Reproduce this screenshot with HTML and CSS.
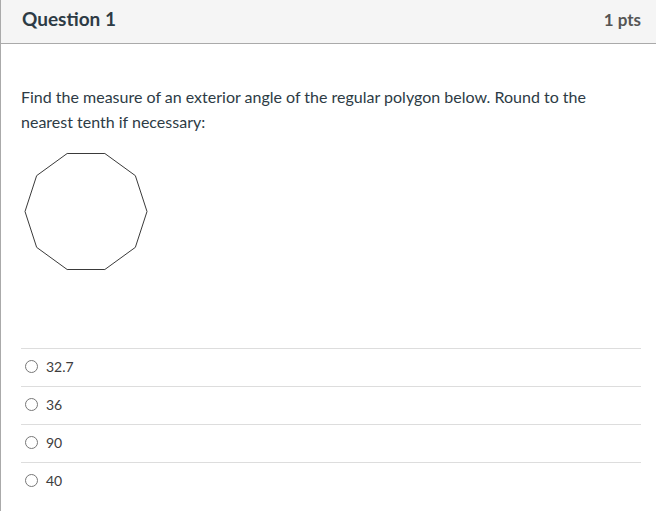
FILE: index.html
```html
<!DOCTYPE html>
<html>
<head>
<meta charset="utf-8">
<link rel="stylesheet" href="styles.css">
</head>
<body>
<div class="question">
  <div class="header">
    <span class="name">Question 1</span>
    <span class="points">1 pts</span>
  </div>
  <div class="body">
    <p class="text">Find the measure of an exterior angle of the regular polygon below. Round to the nearest tenth if necessary:</p>
    <svg class="figure" width="140" height="130" viewBox="0 0 140 130">
      <polygon points="83.85,3.5 114.35,25.65 126,61.5 114.35,97.35 83.85,119.5 46.15,119.5 15.65,97.35 4,61.5 15.65,25.65 46.15,3.5" fill="none" stroke="#3a3a3a" stroke-width="1"/>
    </svg>
    <div class="answers">
      <label class="answer"><span class="radio"></span><span class="answer-text">32.7</span></label>
      <label class="answer"><span class="radio"></span><span class="answer-text">36</span></label>
      <label class="answer"><span class="radio"></span><span class="answer-text">90</span></label>
      <label class="answer"><span class="radio"></span><span class="answer-text">40</span></label>
    </div>
  </div>
</div>
</body>
</html>
```
FILE: styles.css
```css
html, body {
  margin: 0;
  padding: 0;
  background: #ffffff;
}
body {
  font-family: Lato, "Noto Sans", sans-serif;
  color: #2d3b45;
}
.question {
  border-left: 1px solid #aaaaaa;
  min-height: 511px;
  box-sizing: border-box;
}
.header {
  display: flex;
  justify-content: space-between;
  align-items: baseline;
  height: 43px;
  box-sizing: content-box;
  padding: 0 15px 0 21px;
  background: #f5f5f5;
  border-bottom: 1px solid #aaaaaa;
}
.name {
  font-size: 19px;
  line-height: 38px;
  font-weight: 700;
  color: #2d3b45;
}
.points {
  font-size: 17px;
  line-height: 38px;
  font-weight: 700;
  color: #555555;
}
.body {
  padding: 0 15px 0 20px;
}
.text {
  margin: 40px 0 0 0;
  font-size: 16px;
  line-height: 25px;
  color: #2d3b45;
}
.figure {
  display: block;
  margin-top: 16px;
}
.answers {
  margin-top: 68px;
}
.answer {
  display: flex;
  align-items: center;
  height: 34px;
  padding-bottom: 3px;
  border-top: 1px solid #dddddd;
  font-size: 14px;
  color: #3d3d3d;
}
.radio {
  width: 11px;
  height: 11px;
  border: 1px solid #777777;
  border-radius: 50%;
  margin: 0 8px 0 4px;
}
```
